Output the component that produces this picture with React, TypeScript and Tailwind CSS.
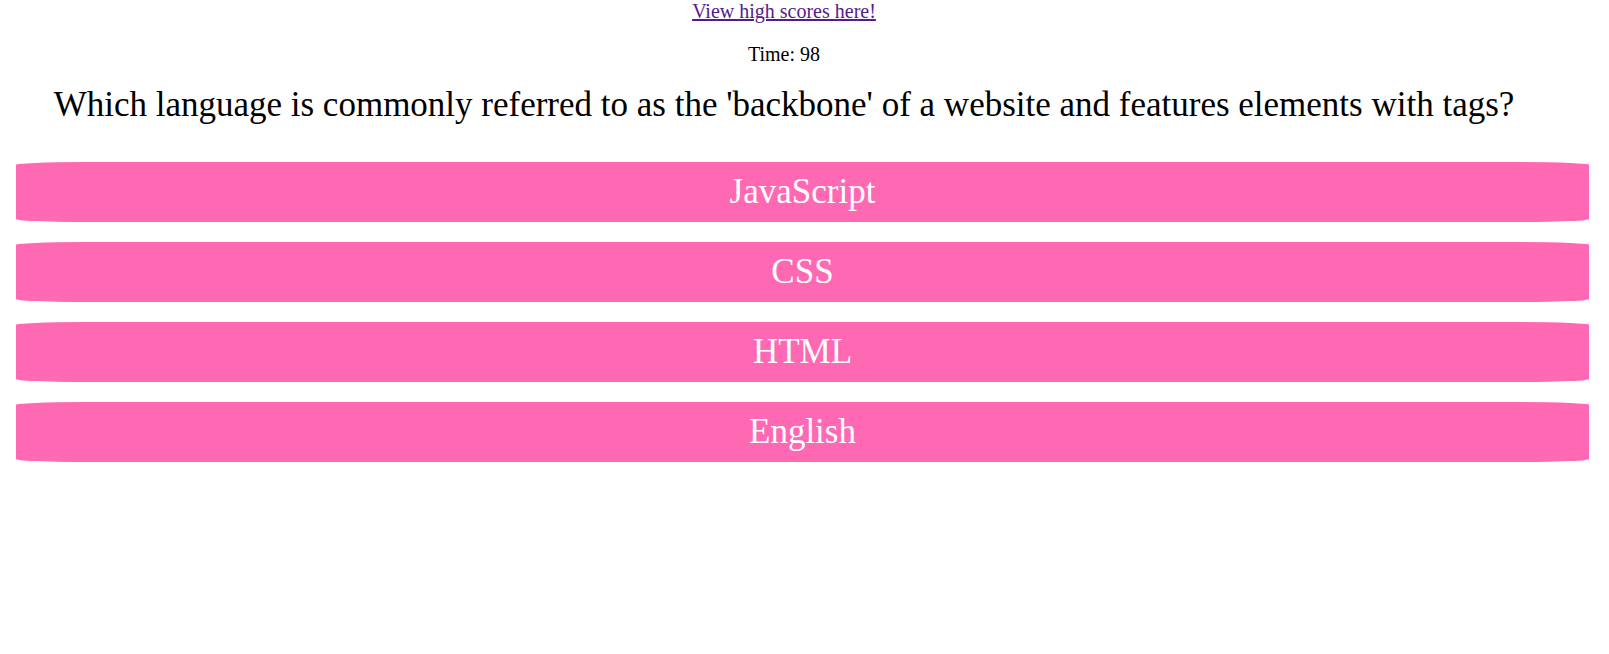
import React from 'react';

const ANSWERS = ['JavaScript', 'CSS', 'HTML', 'English'];

export default function App() {
  return (
    <div className="min-h-screen bg-white font-['Liberation_Serif',serif] text-black">
      {/* Header */}
      <div className="pr-[41px] text-center">
        <a href="#" className="block text-[20px] leading-[23px] text-[#551a8b] underline">
          View high scores here!
        </a>
        <p className="mt-[20px] text-[20px] leading-[23px]">Time: 98</p>
        <h2 className="mt-[19px] text-[35px] leading-[40px] font-normal">
          Which language is commonly referred to as the 'backbone' of a website and features elements with tags?
        </h2>
      </div>

      {/* Answers */}
      <div className="mt-[37px] ml-[16px] mr-[20px] flex flex-col gap-[20px]">
        {ANSWERS.map(a => (
          <button
            key={a}
            className="h-[60px] w-full flex items-center justify-center bg-[#ff69b4] text-white text-[35px] rounded-[66px/3px]"
          >
            {a}
          </button>
        ))}
      </div>
    </div>
  );
}
